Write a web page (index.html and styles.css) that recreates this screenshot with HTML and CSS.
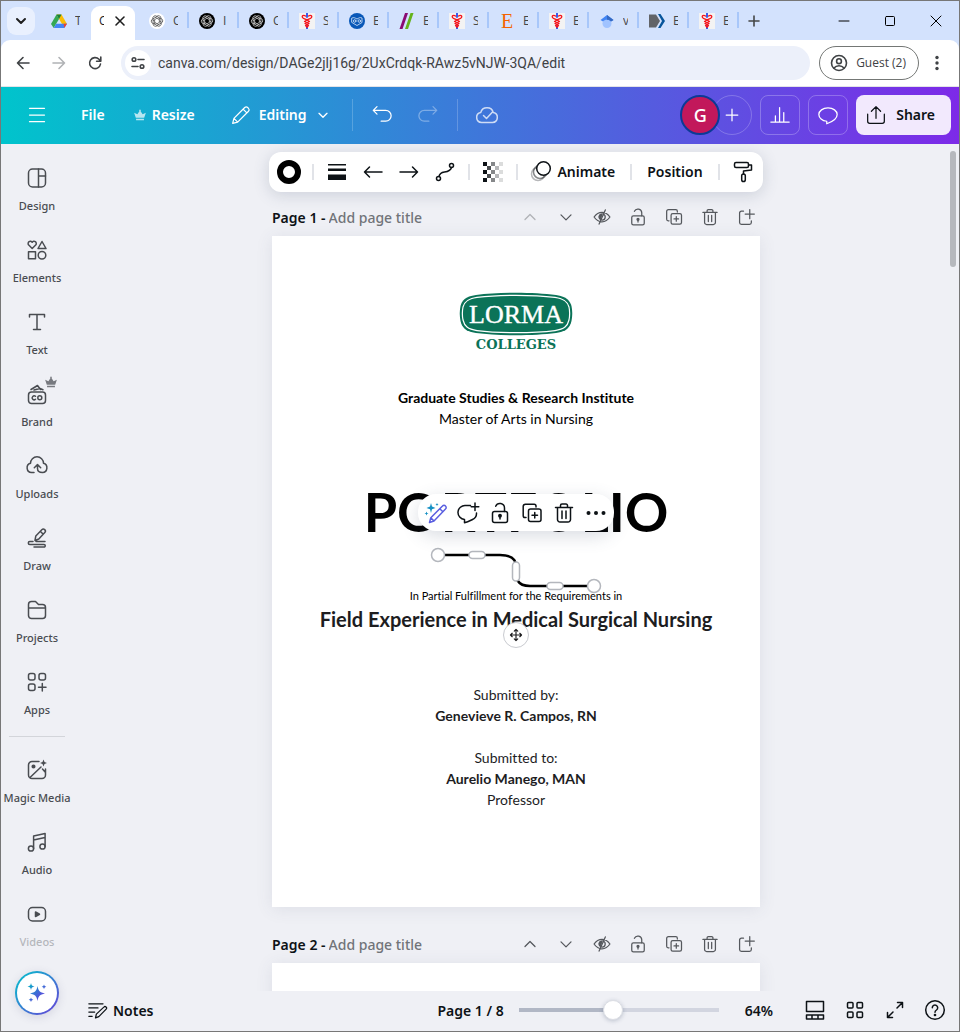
FILE: index.html
```html
<!DOCTYPE html>
<html lang="en">
<head>
<meta charset="utf-8">
<title>Canva editor</title>
<link rel="stylesheet" href="styles.css">
</head>
<body>
<svg class="sprite" aria-hidden="true">
  <symbol id="i-chev" viewBox="0 0 24 24"><path d="M6 9.500l6 6 6-6"/></symbol>
  <symbol id="i-chev-up" viewBox="0 0 24 24"><path d="M6 15l6-6 6 6"/></symbol>
  <symbol id="i-gpt" viewBox="0 0 16 16"><g fill="none" stroke="currentColor" stroke-width=".7"><path d="M6.500 4.500 8 3.200a2.400 2.400 0 0 1 3.900 2.200v3L8.600 10.400"/><path d="M6.500 4.500 8 3.200a2.400 2.400 0 0 1 3.900 2.200v3L8.600 10.400" transform="rotate(60 8 8)"/><path d="M6.500 4.500 8 3.200a2.400 2.400 0 0 1 3.900 2.200v3L8.600 10.400" transform="rotate(120 8 8)"/><path d="M6.500 4.500 8 3.200a2.400 2.400 0 0 1 3.900 2.200v3L8.600 10.400" transform="rotate(180 8 8)"/><path d="M6.500 4.500 8 3.200a2.400 2.400 0 0 1 3.900 2.200v3L8.600 10.400" transform="rotate(240 8 8)"/><path d="M6.500 4.500 8 3.200a2.400 2.400 0 0 1 3.900 2.200v3L8.600 10.400" transform="rotate(300 8 8)"/></g></symbol>
  <symbol id="i-med" viewBox="0 0 16 16"><path fill="#f3f3f3" d="M0 0h16v16H0z"/><path stroke="#3a5cf0" stroke-width="2" d="M8 0v4M8 13v3"/><g fill="none" stroke="#f5141c" stroke-width="1.300"><path d="M6.500 3C4.500 1.500 2.500 3 3.500 4.500S6 5.500 8 7l2.500 1.500L6 10.500l3.500 2L8 14"/><path d="M9.500 3c2-1.500 4 0 3 1.500S10 5.500 8 7L5.500 8.500l4.500 2-3.500 2L8 14"/></g></symbol>
  <symbol id="i-crown" viewBox="0 0 16 16"><path fill="currentColor" stroke="none" d="M3.200 11 1.300 5.500l3.700 1.700L7.300 3.800 7 2h2l-.3 1.800L11 7.200l3.700-1.700L12.800 11zM3.500 12.300h9v1.700h-9z"/></symbol>
  <symbol id="i-eye" viewBox="0 0 24 24"><path d="M2.500 12C5 8.300 8.300 6.300 12 6.300s7 2 9.500 5.700c-2.500 3.700-5.800 5.700-9.500 5.700S5 15.700 2.500 12zM13 8.400a3.700 3.700 0 0 1-1 7.300M16 3.500 8.500 20.500"/><path fill="currentColor" d="M12 8.300a3.700 3.700 0 0 0-2 6.800z"/></symbol>
  <symbol id="i-lock" viewBox="0 0 24 24"><rect x="4.500" y="10.500" width="15" height="11" rx="2"/><path d="M7.700 5.200A4.600 4.600 0 0 1 16.500 7v3.500M12 15.500v2.500"/><circle cx="12" cy="14.800" r="1.200" fill="currentColor"/></symbol>
  <symbol id="i-copy" viewBox="0 0 24 24"><path d="M6 16.500H5A1.800 1.800 0 0 1 3.200 14.700V5.500A2.300 2.300 0 0 1 5.500 3.200h8.700A1.800 1.800 0 0 1 16 5v1"/><rect x="8.500" y="8" width="12.500" height="12.500" rx="2"/><path d="M14.750 11.500v5.500M12 14.250h5.500"/></symbol>
  <symbol id="i-trash" viewBox="0 0 24 24"><path d="M3.500 6.500h17M8.500 6V4.500a1.500 1.500 0 0 1 1.500-1.500h4a1.500 1.500 0 0 1 1.500 1.500V6M5.500 6.500v12a2.500 2.500 0 0 0 2.500 2.500h8a2.500 2.500 0 0 0 2.500-2.500v-12M10 10v7.500M14 10v7.500"/></symbol>
  <symbol id="i-addpage" viewBox="0 0 24 24"><path d="M9 5H6.500A2.200 2.200 0 0 0 4.300 7.200v11.500A2.200 2.200 0 0 0 6.500 20.900h9.700a2.200 2.200 0 0 0 2.200-2.200V16.500M16.500 3v11M11 8.500h11"/></symbol>
</svg>

<div class="window">
  <div class="tabstrip">
    <button class="tab-search" aria-label="Search tabs"><svg class="s12" viewBox="0 0 12 12"><path d="M2 4l4 4 4-4"/></svg></button>
    <nav class="tabs" aria-label="Browser tabs">
      <a class="tab plain" href="#"><svg viewBox="0 0 16 16"><path fill="#fbbc04" d="M5.500 1.500h5L16 11h-5z"/><path fill="#34a853" d="M5.500 1.500 8 6 2.700 15 0 11z"/><path fill="#4285f4" d="M5.200 10.800H16L13.300 15H2.700z"/><path fill="#ea4335" d="M12.500 10.800H16L13.300 15z"/><path fill="#188038" d="M5.500 1.500h5L8 6z"/></svg><span>T</span></a>
      <a class="tab active" href="#"><span>C</span><svg class="close" viewBox="0 0 12 12"><path d="M2 2l8 8M10 2l-8 8"/></svg></a>
      <a class="tab" href="#"><svg class="fav-light"><use href="#i-gpt"/></svg><span>C</span></a>
      <a class="tab" href="#"><svg class="fav-dark"><use href="#i-gpt"/></svg><span>I</span></a>
      <a class="tab" href="#"><svg class="fav-dark"><use href="#i-gpt"/></svg><span>C</span></a>
      <a class="tab" href="#"><svg><use href="#i-med"/></svg><span>S</span></a>
      <a class="tab" href="#"><svg viewBox="0 0 16 16"><circle cx="8" cy="8" r="8" fill="#0958b8"/><g fill="none" stroke="#dceafa" stroke-width=".8"><path d="M3 5c2-1 3 0 5 1 2-1 3-2 5-1v4.500L8 12.500 3 9.500z"/><circle cx="5.700" cy="8" r="1.300"/><circle cx="10.300" cy="8" r="1.300"/></g></svg><span>E</span></a>
      <a class="tab" href="#"><svg viewBox="0 0 16 16"><path fill="#8a0a73" d="M6 0h3L3.500 16h-3z"/><path fill="#64b31b" d="M11.500 0h3L9 16H6z"/></svg><span>E</span></a>
      <a class="tab" href="#"><svg><use href="#i-med"/></svg><span>S</span></a>
      <a class="tab" href="#"><b class="fav-letter">E</b><span>E</span></a>
      <a class="tab" href="#"><svg><use href="#i-med"/></svg><span>E</span></a>
      <a class="tab" href="#"><svg viewBox="0 0 16 16"><circle cx="8" cy="10.500" r="4.500" fill="#a0c3ff"/><path fill="#4285f4" d="M8 2 1.500 7 4 8.500C5.500 6 10.500 6 12 8.500L14.500 7z"/><path fill="#356ac3" d="M8 2v4.700c2 0 3.200.6 4 1.800L14.500 7z"/></svg><span>v</span></a>
      <a class="tab" href="#"><svg viewBox="0 0 16 16"><path fill="#626468" d="M0 1.500h7l4 6.500-4 6.500H0z"/><path fill="#07559b" d="M9 1h2.500L16 8l-4.500 7H9l4-7z"/></svg><span>E</span></a>
      <a class="tab" href="#"><svg><use href="#i-med"/></svg><span>E</span></a>
    </nav>
    <button class="new-tab" aria-label="New tab"><svg class="s12" viewBox="0 0 12 12"><path d="M6 1v10M1 6h10"/></svg></button>
    <div class="win-controls">
      <button aria-label="Minimize"><svg viewBox="0 0 12 12"><path d="M1 6h10"/></svg></button>
      <button aria-label="Maximize"><svg viewBox="0 0 12 12"><rect x="1.500" y="1.500" width="9" height="9" rx="1"/></svg></button>
      <button aria-label="Close"><svg viewBox="0 0 12 12"><path d="M1 1l10 10M11 1L1 11"/></svg></button>
    </div>
  </div>

  <div class="addressbar">
    <button aria-label="Back"><svg viewBox="0 0 16 16"><path d="M14 8H2.500M8 2.500 2.500 8 8 13.500"/></svg></button>
    <button class="dim" aria-label="Forward"><svg viewBox="0 0 16 16"><path d="M2 8h11.500M8 2.500 13.500 8 8 13.500"/></svg></button>
    <button aria-label="Reload"><svg viewBox="0 0 16 16"><path d="M13.500 9A5.500 5.500 0 1 1 12 4.300L13.700 6M13.800 2v4.200H9.600"/></svg></button>
    <div class="url">
      <button class="site-info" aria-label="Site information"><svg viewBox="0 0 16 16"><circle cx="4" cy="4.500" r="1.800"/><path d="M8 4.500h6M2 11.500h6"/><circle cx="12" cy="11.500" r="1.800"/></svg></button>
      <input type="text" aria-label="Address" value="canva.com/design/DAGe2jlj16g/2UxCrdqk-RAwz5vNJW-3QA/edit">
    </div>
    <button class="guest"><svg viewBox="0 0 18 18"><circle cx="9" cy="9" r="7.500"/><circle cx="9" cy="7.200" r="2.400"/><path d="M4 14c1.300-1.600 3-2.300 5-2.300s3.700.7 5 2.300"/></svg>Guest (2)</button>
    <button class="kebab" aria-label="Menu"><svg viewBox="0 0 16 16"><g fill="currentColor" stroke="none"><circle cx="8" cy="2.500" r="1.700"/><circle cx="8" cy="8" r="1.700"/><circle cx="8" cy="13.500" r="1.700"/></g></svg></button>
  </div>

  <header class="appbar">
    <button class="sq" aria-label="Main menu"><svg viewBox="0 0 24 24"><path d="M3 4h18M3 12h18M3 20h18"/></svg></button>
    <button class="file">File</button>
    <button class="resize"><svg class="s14"><use href="#i-crown"/></svg>Resize</button>
    <button class="editing"><svg viewBox="0 0 24 24"><path d="M2 22l1.500-6L16.500 3a2.500 2.500 0 0 1 3.500 0l1 1a2.500 2.500 0 0 1 0 3.500L8 20.500zM14.500 5l4.500 4.500M3.500 16 8 20.500"/></svg>Editing<svg class="s16"><use href="#i-chev"/></svg></button>
    <span class="vline"></span>
    <button class="sq" aria-label="Undo"><svg viewBox="0 0 24 24"><path d="M6 2 1.500 6.500 6 11M2 6.500h14.500a6.200 6.200 0 0 1 0 12.900H11"/></svg></button>
    <button class="sq faded" aria-label="Redo"><svg viewBox="0 0 24 24"><path d="M18 2l4.500 4.500L18 11M22 6.500H7.500a6.200 6.200 0 0 0 0 12.900H13"/></svg></button>
    <span class="vline"></span>
    <button class="sq soft" aria-label="Saved"><svg class="s24" viewBox="0 0 24 24"><path d="M6.500 19.500a5 5 0 0 1-.8-9.900 6.500 6.500 0 0 1 12.600 0 5 5 0 0 1-.8 9.900zM8.500 12.500l3 3 6-6.500"/></svg></button>
    <div class="appbar-right">
      <div class="people"><button class="avatar">G</button><button class="invite" aria-label="Invite"><svg viewBox="0 0 24 24"><path d="M12 5v14M5 12h14"/></svg></button></div>
      <button class="outline" aria-label="Insights"><svg viewBox="0 0 24 24"><path d="M1 20.500h22M6.500 20v-7M11.500 20V3M16.500 20V9"/></svg></button>
      <button class="outline" aria-label="Comments"><svg viewBox="0 0 24 24"><path d="M10.500 19.500C5 19 1 15.500 1 11.500c0-4.400 4.800-8 11-8s11 3.600 11 8c0 5-5 8.500-12.500 11z"/></svg></button>
      <button class="share"><svg viewBox="0 0 24 24"><path d="M2 11v8.500A2.500 2.500 0 0 0 4.500 22h15a2.500 2.500 0 0 0 2.500-2.500V11M12 16V2M6.500 7.500 12 2l5.500 5.500"/></svg>Share</button>
    </div>
  </header>

  <div class="workspace">
    <aside class="rail">
      <nav aria-label="Object panel">
        <a href="#"><svg viewBox="0 0 24 24"><rect x="3.500" y="3" width="17" height="18" rx="4"/><path d="M13.500 3v18M13.500 10h7"/></svg>Design</a>
        <a href="#"><svg viewBox="0 0 24 24"><path d="M7.200 10.500 3.500 6.800a2.200 2.200 0 0 1 3.700-2.500 2.200 2.200 0 0 1 3.700 2.500zM17 3.500l4 7h-8z"/><rect x="3.500" y="13.800" width="7" height="7"/><circle cx="17" cy="17.300" r="3.800"/></svg>Elements</a>
        <a href="#"><svg viewBox="0 0 24 24"><path d="M4.500 7V4.500h15V7M12 4.500v15M8.500 19.500h7"/></svg>Text</a>
        <a href="#" class="brand"><svg viewBox="0 0 24 24"><rect x="3.500" y="10" width="17" height="11.500" rx="3"/><path d="M6 7.500 12.500 3.500l3 4M9 8l6-1.500 3 1.200M10.500 14.300a2 2 0 1 0 0 3"/><circle cx="14.800" cy="15.800" r="2"/></svg><svg class="crown"><use href="#i-crown"/></svg>Brand</a>
        <a href="#"><svg viewBox="0 0 24 24"><path d="M9 18.500H6.500a4.700 4.700 0 0 1-1-9.200 6.500 6.500 0 0 1 13 0 4.700 4.700 0 0 1-1 9.200c-3 0-5-1-5-4v-3.500M9.300 13.700 12.500 10.500l3.200 3.200"/></svg>Uploads</a>
        <a href="#"><svg viewBox="0 0 24 24"><path d="M10 14.500l.8-4.500 6-6.300a2 2 0 0 1 3 2.800l-6 6.500zM15.500 5.500l2.500 2.500M8 15.500H4.800a1.500 1.500 0 0 0 0 3H19a1 1 0 0 1 0 2.500H9M11 15.500h9"/></svg>Draw</a>
        <a href="#"><svg viewBox="0 0 24 24"><path d="M3.500 17.500v-11A3 3 0 0 1 6.500 3.500h4l3 3h4a3 3 0 0 1 3 3v8a3 3 0 0 1-3 3h-11a3 3 0 0 1-3-3zM3.500 10h17"/></svg>Projects</a>
        <a href="#"><svg viewBox="0 0 24 24"><rect x="3.500" y="3.500" width="6.500" height="6.500" rx="2"/><rect x="14" y="3.500" width="6.500" height="6.500" rx="2"/><rect x="3.500" y="14" width="6.500" height="6.500" rx="2"/><path d="M17.300 13.500v7.500M13.500 17.300H21"/></svg>Apps</a>
        <hr>
        <a href="#"><svg viewBox="0 0 24 24"><path d="M14 3.500H7A3.500 3.500 0 0 0 3.500 7v10A3.500 3.500 0 0 0 7 20.500h10a3.500 3.500 0 0 0 3.500-3.500V11M5 19.500 16 9M17.500 11l3 3.500"/><circle cx="8.500" cy="8.500" r="1.300" fill="currentColor"/><path fill="currentColor" stroke="none" d="M18.500 1.500l1 2.500 2.500 1-2.500 1-1 2.500-1-2.500-2.500-1 2.500-1z"/></svg>Magic Media</a>
        <a href="#"><svg viewBox="0 0 24 24"><circle cx="6" cy="18.500" r="2.600"/><circle cx="17.500" cy="16.500" r="2.600"/><path d="M8.600 18.500V6l11.500-2.500v13M8.600 10 20 7.500"/></svg>Audio</a>
        <a href="#" class="last"><svg viewBox="0 0 24 24"><rect x="3.500" y="5.500" width="17" height="13.500" rx="4"/><path fill="currentColor" d="M10.500 10v4.500l4-2.250z"/></svg><span>Videos</span></a>
      </nav>
      <button class="magic" aria-label="Canva Assistant"><svg viewBox="0 0 24 24"><defs><linearGradient id="mg" x1="0" y1="0" x2="1" y2="1"><stop offset="0" stop-color="#00b5c5"/><stop offset=".6" stop-color="#4a5fd8"/><stop offset="1" stop-color="#7d2ae8"/></linearGradient></defs><path fill="url(#mg)" d="M12.500 5c1 5 2.200 6.400 7.500 7.500-5.300 1.100-6.500 2.500-7.500 7.500-1-5-2.200-6.400-7.500-7.500 5.300-1.100 6.500-2.500 7.500-7.500zM6 2c.5 2.500 1 3 3.500 3.500C7 6 6.500 6.500 6 9c-.5-2.500-1-3-3.500-3.500C5 5 5.500 4.500 6 2zM19 3.500l.7 1.600 1.600.7-1.600.7-.7 1.600-.7-1.600-1.600-.7 1.600-.7zM6 16.500l.7 1.600 1.600.7-1.600.7L6 21l-.7-1.500-1.600-.7 1.600-.7z"/></svg></button>
    </aside>

    <main class="stage">
      <div class="scroller">
        <div class="toolbar">
          <button aria-label="Line colour"><span class="donut"></span></button>
          <i></i>
          <button aria-label="Line weight"><svg viewBox="0 0 24 24"><path fill="currentColor" stroke="none" d="M3 4h18v1.500H3zM3 8.500h18V11H3zM3 14.500h18V20H3z"/></svg></button>
          <button aria-label="Line start"><svg viewBox="0 0 24 24"><path d="M21 12H3.500M8.500 7l-5 5 5 5"/></svg></button>
          <button aria-label="Line end"><svg viewBox="0 0 24 24"><path d="M3 12h17.500M15.500 7l5 5-5 5"/></svg></button>
          <button aria-label="Line type"><svg viewBox="0 0 24 24"><circle cx="5.500" cy="18.500" r="2"/><circle cx="18.500" cy="5.500" r="2"/><path d="M6 16.500c.5-3 2-4 5.500-4.500s6.300-1.500 7-4.500"/></svg></button>
          <i></i>
          <button aria-label="Transparency"><svg viewBox="0 0 24 24"><g fill="currentColor" stroke="none"><path d="M2 2h4v4H2zM2 10h4v4H2zM2 18h4v4H2z"/><path opacity=".75" d="M6 6h4v4H6zM6 14h4v4H6z"/><path opacity=".5" d="M10 2h4v4h-4zM10 10h4v4h-4zM10 18h4v4h-4z"/><path opacity=".3" d="M14 6h4v4h-4zM14 14h4v4h-4z"/><path opacity=".15" d="M18 2h4v4h-4zM18 10h4v4h-4zM18 18h4v4h-4z"/></g></svg></button>
          <i></i>
          <button class="text animate"><svg viewBox="0 0 24 24"><circle cx="9" cy="15" r="6.500" opacity=".3"/><circle cx="11" cy="13" r="6.500" opacity=".5"/><circle cx="14.500" cy="9.500" r="6.800" fill="#fff"/></svg>Animate</button>
          <i></i>
          <button class="text position">Position</button>
          <i></i>
          <button aria-label="Copy style"><svg viewBox="0 0 24 24"><rect x="3.500" y="2.500" width="14" height="5" rx="1.500"/><path d="M17.500 5H20.500v5l-8 1v3"/><rect x="10.700" y="14" width="3.600" height="7.500" rx="1.800"/></svg></button>
        </div>

        <section class="page-block">
          <div class="page-head">
            <label for="t1">Page 1 -</label><input id="t1" type="text" placeholder="Add page title">
            <div class="page-actions">
              <button class="off" aria-label="Move up" disabled><svg><use href="#i-chev-up"/></svg></button>
              <button aria-label="Move down"><svg><use href="#i-chev"/></svg></button>
              <button aria-label="Hide page"><svg><use href="#i-eye"/></svg></button>
              <button aria-label="Lock page"><svg><use href="#i-lock"/></svg></button>
              <button aria-label="Duplicate page"><svg><use href="#i-copy"/></svg></button>
              <button aria-label="Delete page"><svg><use href="#i-trash"/></svg></button>
              <button aria-label="Add page"><svg><use href="#i-addpage"/></svg></button>
            </div>
          </div>
          <article class="sheet">
            <svg class="logo" viewBox="0 0 114 58" role="img" aria-label="Lorma Colleges">
              <path fill="#0b7358" d="M17 3C40 0 74 0 97 3c11 1.500 14 6 15.500 11 1 5 1 10 0 15C111 35 108 39.500 97 41c-23 3-57 3-80 0C6 39.500 3 35 1.500 29c-1-5-1-10 0-15C3 8.500 6 4.500 17 3z"/>
              <path fill="none" stroke="#fff" stroke-width="1.200" d="M18 5.400C40 2.600 74 2.600 96 5.400c9.500 1.300 12.500 4.600 14 9.600.9 4.500.9 8.500 0 13-1.500 6-4.500 9.300-14 10.600-22 2.800-56 2.800-78 0C8.500 37.300 5.500 34 4 28c-.9-4.500-.9-8.500 0-13 1.500-5 4.500-8.300 14-9.600z"/>
              <text class="logo-top" x="57" y="31">LORMA</text>
              <text class="logo-sub" x="57" y="57">COLLEGES</text>
            </svg>
            <div class="intro"><b>Graduate Studies &amp; Research Institute</b><span>Master of Arts in Nursing</span></div>
            <h1>PORTFOLIO</h1>
            <p class="partial">In Partial Fulfillment for the Requirements in</p>
            <h2>Field Experience in Medical Surgical Nursing</h2>
            <div class="credits">
              <p><span>Submitted by:</span><b>Genevieve R. Campos, RN</b></p>
              <p><span>Submitted to:</span><b>Aurelio Manego, MAN</b><span>Professor</span></p>
            </div>

            <svg class="connector" viewBox="0 0 172 48">
              <path d="M8 9h62c18 0 16 10 16 16s0 15 14 15h64" fill="none" stroke="#000" stroke-width="2.500"/>
              <g fill="#fff" stroke="#b4b7bd"><rect x="39" y="5.500" width="16" height="7" rx="3.500"/><rect x="82.500" y="16" width="7" height="19" rx="3.500"/><rect x="117" y="36.500" width="16" height="7" rx="3.500"/><circle cx="8" cy="9" r="6.500"/><circle cx="164" cy="40" r="6.500"/></g>
            </svg>
            <div class="quick">
              <button aria-label="Magic edit"><svg viewBox="0 0 24 24"><g stroke="#5a5fe0"><path d="M5.500 21.500l1.300-4.800L18.500 5a2 2 0 0 1 3 0 2 2 0 0 1 0 3L10 20zM15.800 7.800l3 3M6.800 16.700 10 20"/></g><path fill="#1590c4" stroke="none" d="M7 2l1 3.500L11.500 7 8 8.300 7 12 6 8.300 2.500 7 6 5.500zM2.500 10.500l.6 1.400 1.400.6-1.400.6-.6 1.400-.6-1.400-1.400-.6 1.400-.6zM13 2l.5 1 1 .5-1 .5-.5 1-.5-1-1-.5 1-.5z"/></svg></button>
              <button aria-label="Comment"><svg viewBox="0 0 24 24"><path d="M14.500 4.500H9.500a7 7 0 0 0-1 14v3.300c3.500-.8 6-2.300 8-3.300a6.800 6.800 0 0 0 4-6.500M19 2v7.500M15.200 5.700h7.600"/></svg></button>
              <button aria-label="Lock"><svg><use href="#i-lock"/></svg></button>
              <button aria-label="Duplicate"><svg><use href="#i-copy"/></svg></button>
              <button aria-label="Delete"><svg><use href="#i-trash"/></svg></button>
              <button aria-label="More"><svg viewBox="0 0 24 24"><g fill="currentColor" stroke="none"><circle cx="4.500" cy="12" r="2"/><circle cx="12" cy="12" r="2"/><circle cx="19.500" cy="12" r="2"/></g></svg></button>
            </div>
            <button class="mover" aria-label="Move"><svg viewBox="0 0 24 24"><path d="M12 2.500v19M2.500 12h19M9 5.500l3-3 3 3M9 18.500l3 3 3-3M5.500 9l-3 3 3 3M18.500 9l3 3-3 3"/></svg></button>
          </article>
        </section>

        <section class="page-block">
          <div class="page-head">
            <label for="t2">Page 2 -</label><input id="t2" type="text" placeholder="Add page title">
            <div class="page-actions">
              <button aria-label="Move up"><svg><use href="#i-chev-up"/></svg></button>
              <button aria-label="Move down"><svg><use href="#i-chev"/></svg></button>
              <button aria-label="Hide page"><svg><use href="#i-eye"/></svg></button>
              <button aria-label="Lock page"><svg><use href="#i-lock"/></svg></button>
              <button aria-label="Duplicate page"><svg><use href="#i-copy"/></svg></button>
              <button aria-label="Delete page"><svg><use href="#i-trash"/></svg></button>
              <button aria-label="Add page"><svg><use href="#i-addpage"/></svg></button>
            </div>
          </div>
          <article class="sheet"></article>
        </section>
        <span class="thumb"></span>
      </div>

      <footer class="statusbar">
        <button class="notes"><svg viewBox="0 0 24 24"><path d="M1 4.500h17M1 9.500h11M1 14.500h7M1 19.500h4M9 21.500l1-4.500 9-8.500a1.800 1.800 0 0 1 2.800 2.500L13 20z"/></svg>Notes</button>
        <div class="zoom">
          <button>Page 1 / 8</button>
          <input type="range" min="0" max="100" value="47" aria-label="Zoom">
          <button class="percent">64%</button>
        </div>
        <div class="views">
          <button aria-label="Thumbnails"><svg viewBox="0 0 24 24"><rect x="3.500" y="3.500" width="17" height="10"/><path d="M3.500 17h17v4h-17zM9 17v4M15 17v4"/></svg></button>
          <button aria-label="Grid view"><svg viewBox="0 0 24 24"><rect x="4.500" y="4.500" width="5.500" height="5.500" rx="1"/><rect x="14" y="4.500" width="5.500" height="5.500" rx="1"/><rect x="4.500" y="14" width="5.500" height="5.500" rx="1"/><rect x="14" y="14" width="5.500" height="5.500" rx="1"/></svg></button>
          <button aria-label="Full screen"><svg viewBox="0 0 24 24"><path d="M14.500 4.500h5v5M19.500 4.500 14 10M9.500 19.500h-5v-5M4.500 19.500 10 14"/></svg></button>
          <button aria-label="Help"><svg viewBox="0 0 24 24"><circle cx="12" cy="12" r="9.300"/><path d="M9.300 9.800a2.700 2.700 0 1 1 4.200 2.200c-1 .7-1.500 1.200-1.500 2.300"/><circle cx="12" cy="17" r=".6" fill="currentColor"/></svg></button>
        </div>
      </footer>
    </main>
  </div>
</div>
</body>
</html>
```
FILE: styles.css
```css
* { box-sizing: border-box; }
body { margin: 0; font-family: "Noto Sans", sans-serif; font-size: 14px; color: #0d1216; }
button, input { font: inherit; color: inherit; border: 0; background: none; padding: 0; margin: 0; }
button { display: inline-flex; align-items: center; justify-content: center; flex: none; }
a { color: inherit; text-decoration: none; }
h1, h2, p { margin: 0; }
svg { width: 20px; height: 20px; flex: none; fill: none; stroke: currentColor; stroke-width: 1.5; stroke-linecap: round; stroke-linejoin: round; }
.sprite { display: none; }
.s12 { width: 12px; height: 12px; }
.s14 { width: 14px; height: 14px; }
.s16 { width: 16px; height: 16px; stroke-width: 2; }
.s24 { width: 24px; height: 24px; }

.window { display: flex; flex-direction: column; height: 100vh; min-height: 600px; overflow: hidden; border: 1px solid #777; background: #fff; }

/* Browser chrome */
.tabstrip { display: flex; align-items: center; flex: none; height: 48px; margin-bottom: -9px; padding: 0 0 9px 6px; background: #d3e2fd; font-family: "Open Sans", sans-serif; font-size: 12px; color: #454746; }
.tab-search { width: 28px; height: 28px; border-radius: 9px; background: #e9f0fe; color: #1f1f1f; }
.tab-search svg { stroke-width: 2; }
.tabs { display: flex; align-self: stretch; margin-left: 6px; min-width: 0; }
.tab { display: flex; align-items: center; gap: 8px; width: 50px; padding: 0 10px; position: relative; overflow: hidden; }
.tab span { width: 5px; overflow: hidden; flex: none; }
.tab svg { width: 16px; height: 16px; stroke: none; }
.tab:not(.plain):not(.active)::after { content: ""; position: absolute; right: 0; top: 11px; width: 2px; height: 16px; background: #a8c7fa; }
.tab.active { width: 44px; height: 34px; margin: 5px 4px 0 0; padding: 0 8px 5px; gap: 10px; background: #fff; border-radius: 9px 9px 0 0; color: #1f1f1f; }
.tab .close { width: 12px; height: 12px; stroke: currentColor; stroke-width: 1.6; }
.fav-light { background: #fff; color: #444; border-radius: 50%; }
.fav-dark { background: #000; color: #ddd; border-radius: 50%; }
.fav-light, .fav-dark { overflow: hidden; }
.fav-letter { width: 16px; text-align: center; font: 20px/16px "Liberation Serif", serif; color: #f56400; }
.new-tab { width: 30px; height: 28px; }
.new-tab svg { stroke-width: 1.6; }
.win-controls { display: flex; margin-left: auto; align-self: stretch; color: #000; }
.win-controls button { width: 46px; }
.win-controls svg { width: 12px; height: 12px; stroke-width: 1; }

.addressbar { position: relative; display: flex; align-items: center; flex: none; height: 47px; padding: 0 12px 1px 8px; gap: 8px; border-radius: 9px 9px 0 0; border-bottom: 1px solid #e3e3e8; background: #fff; font-family: "Open Sans", sans-serif; color: #3f4245; }
.addressbar > button { width: 28px; height: 28px; }
.addressbar svg { width: 16px; height: 16px; stroke-width: 1.6; }
.addressbar .dim { color: #b0b2b5; }
.url { display: flex; align-items: center; flex: 1; min-width: 0; height: 34px; margin: 0 1px 0 4px; padding: 0 4px; border-radius: 17px; background: #ecf0fa; }
.site-info { width: 26px; height: 26px; border-radius: 50%; background: #fff; }
.url input { flex: 1; min-width: 0; padding-left: 7px; font-family: Roboto, sans-serif; font-size: 14px; }
.addressbar .guest { width: auto; height: 34px; gap: 8px; padding: 0 12px 0 10px; border: 1px solid #747775; border-radius: 17px; font-size: 12px; }
.guest svg { width: 18px; height: 18px; }
.addressbar .kebab { width: 20px; }

/* Application header */
.appbar { display: flex; align-items: center; flex: none; height: 57px; padding: 0 8px 2px 16px; background: linear-gradient(90deg, #00c4cc, #7d2ae8); color: #fff; font-weight: 600; }
.appbar button { height: 40px; }
.sq { width: 40px; }
.file { margin-left: 8px; padding: 0 16px; }
.resize { gap: 5px; padding: 0 14px 0 12px; }
.resize svg { opacity: .7; }
.editing { gap: 8px; padding: 0 12px 0 22px; }
.vline { width: 1px; height: 32px; margin: 0 9px; background: rgba(255, 255, 255, .2); }
.faded { margin-left: 6px; opacity: .35; }
.soft { opacity: .75; }
.appbar-right { display: flex; gap: 8px; margin-left: auto; }
.people { display: flex; }
.avatar, .invite { width: 40px; border-radius: 50%; }
.avatar { z-index: 1; border: 2px solid #0b3a96; background: #c2185b; font-size: 18px; font-weight: 500; }
.invite { margin-left: -8px; border: 1px solid rgba(255, 255, 255, .22); }
.outline { width: 40px; border: 1px solid rgba(255, 255, 255, .25); border-radius: 8px; }
.share { gap: 10px; padding: 0 16px 0 10px; border-radius: 8px; background: #f2e9fd; color: #0d1216; }

/* Workspace */
.workspace { display: flex; flex: 1; min-height: 0; background: #eff0f5; }
.rail { display: flex; flex-direction: column; align-items: center; flex: none; width: 72px; padding: 10px 0 16px; }
.rail nav { align-self: stretch; flex: 1; min-height: 0; color: #494c51; font-size: 11px; font-weight: 500; line-height: 16px; }
.rail a { position: relative; display: flex; flex-direction: column; align-items: center; gap: 8px; padding: 12px 0; white-space: nowrap; }
.rail nav svg { width: 24px; height: 24px; }
.rail nav .crown { position: absolute; left: 43px; top: 5px; width: 14px; height: 14px; color: #77797f; }
.rail hr { width: 56px; height: 1px; margin: 6px auto 9px; border: 0; background: #d3d5da; }
.rail .last span { opacity: .35; }
.magic { width: 44px; height: 44px; border: 2px solid transparent; border-radius: 50%; background: linear-gradient(#fff, #fff) padding-box, linear-gradient(135deg, #00c4cc, #6a3fd8) border-box; box-shadow: 0 2px 10px rgba(60, 60, 110, .15); }
.magic svg { width: 24px; height: 24px; stroke: none; }

.stage { display: flex; flex-direction: column; flex: 1; min-width: 0; }
.scroller { position: relative; flex: 1; min-height: 0; overflow: hidden; display: flex; flex-direction: column; align-items: center; padding-top: 8px; }
.thumb { position: absolute; right: 3px; top: 7px; width: 6px; height: 116px; border-radius: 3px; background: #b6b8bd; }
.toolbar { display: flex; align-items: center; flex: none; gap: 12px; height: 40px; padding: 0 8px; border-radius: 12px; background: #fff; box-shadow: 0 3px 16px rgba(64, 79, 109, .2); font-weight: 600; z-index: 1; }
.toolbar svg { width: 24px; height: 24px; }
.toolbar i { width: 2px; height: 16px; margin: 0 -1px; background: #e1e3e8; }
.toolbar .text { padding: 0 4px 2px; }
.toolbar .animate { padding-left: 0; gap: 4px; }
.donut { width: 24px; height: 24px; border: 6px solid #000; border-radius: 50%; }

.page-block { width: 100%; max-width: 488px; flex: none; margin-top: 8px; }
.page-block + .page-block { margin-top: 20px; }
.page-head { display: flex; align-items: center; height: 36px; padding-bottom: 2px; font-weight: 600; }
.page-head input { flex: 1; min-width: 0; padding-left: 3px; font-weight: 500; }
.page-head input::placeholder { color: #717479; opacity: 1; }
.page-actions { display: flex; gap: 12px; padding-right: 2px; color: #55585d; }
.page-actions button { width: 24px; height: 24px; }
.page-actions .off { opacity: .4; }
.sheet { position: relative; display: flex; flex-direction: column; align-items: center; min-height: 671px; padding: 56px 24px; background: #fff; box-shadow: 0 2px 16px rgba(64, 79, 109, .1); font-family: Lato, sans-serif; font-variant-ligatures: none; line-height: 21px; text-align: center; color: #1d1d1f; }
.logo { width: 114px; height: 58px; stroke: none; }
.logo-top { font: 26px "Liberation Serif", serif; fill: #fff; stroke: #fff; stroke-width: .4; text-anchor: middle; }
.logo-sub { font: bold 13px "DejaVu Serif", serif; fill: #0b7358; text-anchor: middle; }
.intro { display: flex; flex-direction: column; margin-top: 37px; color: #000; }
h1 { margin-top: 51px; font-size: 54px; line-height: 64px; color: #000; }
.partial { margin-top: 44px; font-size: 11px; line-height: 16px; color: #000; }
h2 { font-size: 20px; line-height: 30px; white-space: nowrap; }
.credits { display: flex; flex-direction: column; gap: 21px; margin-top: 50px; }
.credits p { display: flex; flex-direction: column; }

/* Selection handles lie over the artwork */
.connector { position: absolute; left: 158px; top: 310px; width: 172px; height: 48px; stroke: none; }
.quick { position: absolute; left: 146px; top: 258px; display: flex; align-items: center; gap: 8px; height: 37px; padding: 0 6px; border-radius: 18px; background: #fff; box-shadow: 0 5px 18px rgba(64, 79, 109, .2); color: #0d1216; }
.quick button { width: 24px; height: 24px; }
.quick svg { width: 24px; height: 24px; }
.mover { position: absolute; left: 231px; top: 386px; width: 26px; height: 26px; border: 1px solid #c9cbd0; border-radius: 50%; background: #fff; }
.mover svg { width: 14px; height: 14px; stroke-width: 2; }

.statusbar { display: flex; align-items: center; flex: none; height: 40px; padding: 0 12px 2px 15px; font-weight: 600; }
.notes { gap: 5px; }
.zoom { display: flex; align-items: center; gap: 15px; margin-left: auto; }
.percent { margin-left: 11px; }
.zoom input { appearance: none; width: 200px; height: 20px; background: linear-gradient(90deg, #b1b7c5 47%, #d2d5e0 47%) center / 100% 4px no-repeat; }
.zoom input::-webkit-slider-thumb { appearance: none; width: 20px; height: 20px; border: 1px solid #dcdee4; border-radius: 50%; background: #fff; box-shadow: 0 1px 4px rgba(64, 79, 109, .3); }
.views { display: flex; gap: 16px; margin-left: 30px; }
.views svg { width: 24px; height: 24px; }
```
